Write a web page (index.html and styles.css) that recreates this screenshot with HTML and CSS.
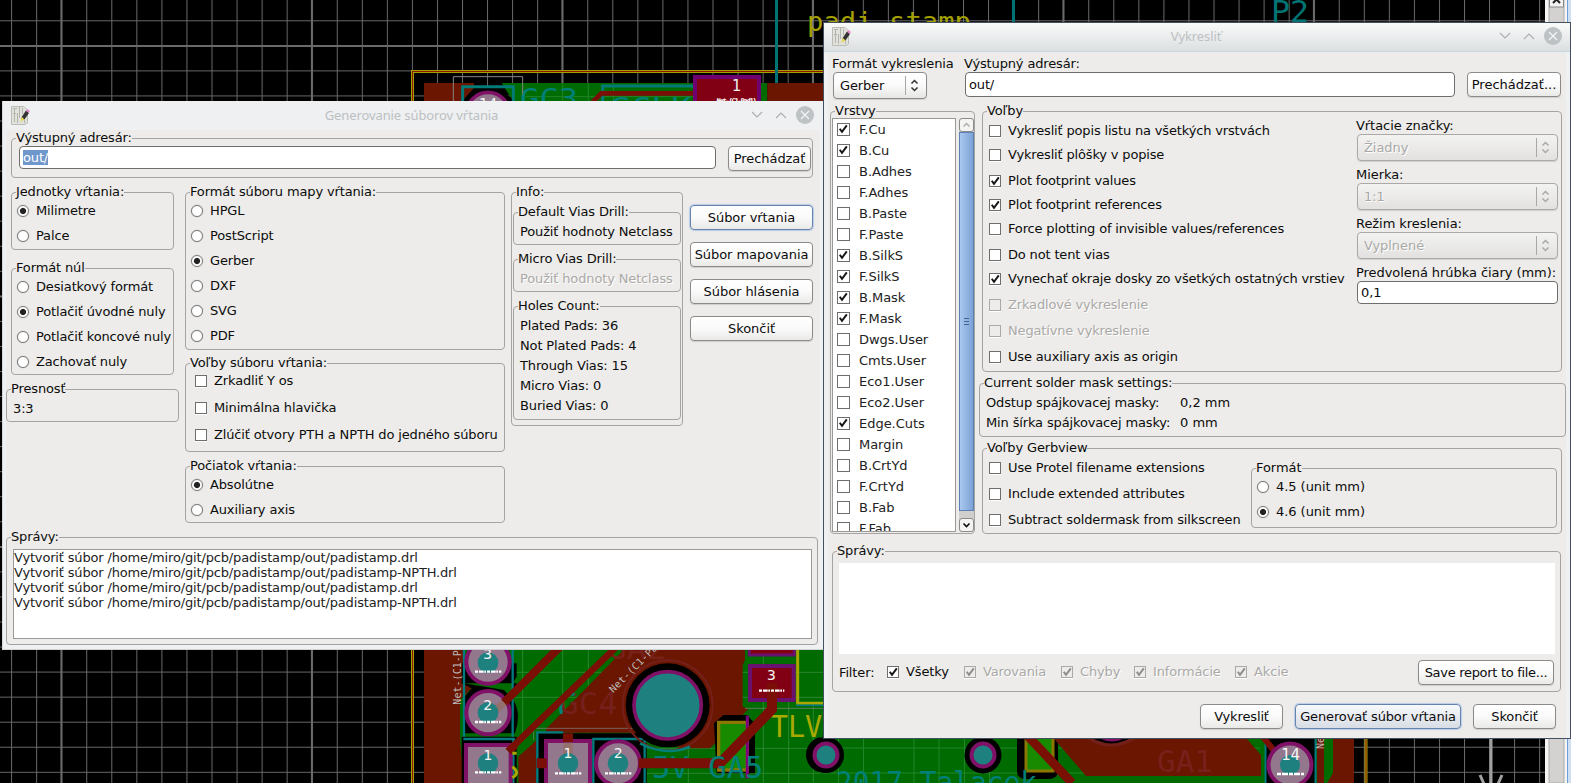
FILE: index.html
```html
<!DOCTYPE html>
<html lang="sk">
<head>
<meta charset="utf-8">
<title>Pcbnew</title>
<link rel="stylesheet" href="styles.css">
</head>
<body>
<svg width="0" height="0" class="defs">
  <symbol id="check" viewBox="0 0 13 13"><path d="M3 6.2 L5.4 9.6 L10.6 2.6" fill="none" stroke="currentColor" stroke-width="2.1"/></symbol>
  <symbol id="updown" viewBox="0 0 9 13"><path d="M1.5 4.5 L4.5 1.5 L7.5 4.5 M1.5 8.5 L4.5 11.5 L7.5 8.5" fill="none" stroke="currentColor" stroke-width="1.5"/></symbol>
  <symbol id="min" viewBox="0 0 12 8"><path d="M1 1 L6 6 L11 1" fill="none" stroke="currentColor" stroke-width="1.1"/></symbol>
  <symbol id="max" viewBox="0 0 12 8"><path d="M1 7 L6 2 L11 7" fill="none" stroke="currentColor" stroke-width="1.1"/></symbol>
  <symbol id="close" viewBox="0 0 18 18"><circle cx="9" cy="9" r="9" fill="#bdc2c5"/><path d="M5 5 L13 13 M13 5 L5 13" stroke="#f4f5f5" stroke-width="1.2"/></symbol>
  <symbol id="app" viewBox="0 0 20 20">
    <path d="M1.500 1.500 H14 L17.500 5 V18 L15 19.500 H1.500 Z" fill="#e2e2dd" stroke="#bcbcb6"/>
    <path d="M4.500 4 V17 M7.500 8 V18 M9.500 2 V13 M12.500 3 V9 M3 3.500 H7 M3 8.500 H6 M14.500 14 V18" stroke="#b4b4ae" fill="none"/>
    <path d="M11 15.500 L12 11.500 L16 5.500 L19 8 L14.800 14 Z" fill="#333"/>
    <path d="M10 17 L11.800 12 L14.500 14.200 Z" fill="#e6d850"/>
    <path d="M16 5.800 L17.600 4 L20 6 L18.800 8 Z" fill="#e08ad0"/>
  </symbol>
</svg>

<svg class="board" viewBox="0 0 1571 783" width="1571" height="783">
  <defs>
    <pattern id="gv" width="25.05" height="25.05" x="11.1" y="20.3" patternUnits="userSpaceOnUse"><path d="M.5 0V25.05M0 .5H25.05" stroke="#6a6a6a" fill="none"/></pattern>
    <pattern id="gm" width="250.5" height="250.5" x="60.4" y="45" patternUnits="userSpaceOnUse"><path d="M1 0V250.5M0 1H250.5" stroke="#6a6a6a" stroke-width="2" fill="none"/></pattern>
  </defs>
  <rect width="1571" height="783" fill="#000"/>
  <rect width="1571" height="783" fill="url(#gv)"/>
  <rect width="1571" height="783" fill="url(#gm)"/>
  <g fill="none"><rect x="412.5" y="71.5" width="953.5" height="760" stroke="#a3a000" stroke-width="3"/><rect x="412.5" y="71.5" width="953.5" height="760" stroke="#8c1800"/></g>
  <path d="M776.5 0V84M1013.500 0V23" stroke="#007474" stroke-width="3"/>
  <g class="stroke-text">
    <text x="807" y="31" font-size="27" textLength="164" lengthAdjust="spacingAndGlyphs" fill="#a3a000">padi stamp</text>
    <text x="1271" y="22" font-size="30" textLength="38" lengthAdjust="spacingAndGlyphs" fill="#007474">P2</text>
  </g>

  <!-- upper strip of the board -->
  <g transform="scale(.33333) translate(1200 0)">
    <path d="M72 249H222V320H72Z" fill="#6b1600"/>
    <path d="M305 249H1102V320H350Z" fill="#006b00"/>
    <path d="M1102 249H1290V320H1102Z" fill="#6b1600"/>
    <path d="M180 310L222 264H300L350 310Z" fill="#000"/>
    <path d="M365 290H880M488 250V310M565 250V310M640 250V310" stroke="#23852a" stroke-width="3"/>
    <path d="M160 310V230H368V310" fill="none" stroke="#888" stroke-width="3"/>
    <path d="M188 310V260H340V310M608 310V258H880" fill="none" stroke="#007b78" stroke-width="9"/>
    <path d="M574 310L604 280H1000" fill="none" stroke="#7a0f08" stroke-width="14"/>
    <circle cx="264" cy="342" r="65" fill="#93778d" stroke="#7f1167" stroke-width="11"/>
    <rect x="885" y="231" width="192" height="100" fill="#820013" stroke="#6f0070" stroke-width="12"/>
    <g class="stroke-text">
      <text x="360" y="324" font-size="80" textLength="175" lengthAdjust="spacingAndGlyphs" fill="#008078">GC3</text>
      <text x="634" y="350" font-size="82" textLength="240" lengthAdjust="spacingAndGlyphs" fill="#008078">SCLK</text>
      <text x="236" y="330" font-size="46" fill="#eee">14</text>
      <text x="995" y="273" font-size="46" fill="#eee">1</text>
      <text x="950" y="310" font-size="19" textLength="120" fill="#fff" stroke="#fff">Net-(C1-Pad1)</text>
    </g>
  </g>

  <!-- lower-left part of the board -->
  <g transform="translate(400 640) scale(.33333)">
    <path d="M72 0H1290V440H72Z" fill="#006b00"/>
    <path d="M340 97H1270M340 172H1270M720 325H1270M340 400H1270M368 0V280M488 0V260M565 0V300M865 300V430M1090 0V430M1166 180V430M1240 190V430" stroke="#2a862e" stroke-width="3" fill="none"/>
    <path d="M72 0H192V130L215 145L180 180V300L192 430H72Z" fill="#6b1600"/>
    <path d="M680 20H1035V60L1028 75V200L1045 207L930 325H850L720 290L690 278H435L440 265Z" fill="#6b1600"/>
    <path d="M355 350L410 300V430H355Z" fill="#6b1600"/>
    <path d="M192 130H350V160Q325 145 350 110V70H185V130L215 145L190 175V280H345Q365 220 340 180L312 150" fill="#000"/>
    <path d="M185 290H350V430H185Z" fill="#000"/>
    <path d="M410 280H720L740 310V430H410Z" fill="#000"/>
    <path d="M192 20V290M338 20V290M190 297H345M412 430V277H490M580 430V297H734V430M340 297V430" fill="none" stroke="#007b80" stroke-width="7"/>
    <path d="M401 300V265H700M1035 205H1270" fill="none" stroke="#888" stroke-width="2"/>
    <circle cx="803" cy="196" r="126" fill="#000"/>
    <circle cx="803" cy="196" r="135" fill="none" stroke="#74201a" stroke-width="6"/>
    <path d="M720 310Q800 350 870 320" fill="none" stroke="#008078" stroke-width="8"/>
    <circle cx="803" cy="196" r="101" fill="#1f8080" stroke="#7f1167" stroke-width="11"/>
    <path d="M942 250L970 225H1040L1065 250V400H950Z" fill="#000"/>
    <path d="M956 247H1042V390H956Z" fill="#178a00" stroke="#8c7800" stroke-width="10"/>
    <path d="M1042 227V415" stroke="#7f007f" stroke-width="9"/>
    <path d="M1050 78H1181V180H1050Z" fill="#820013" stroke="#6a1170" stroke-width="12"/>
    <path d="M1048 10H1183V45H1048Z" fill="#820013" stroke="#6a1170" stroke-width="9"/>
    <path d="M1193 20V190H1270" fill="none" stroke="#aaa800" stroke-width="9"/>
    <path d="M1188 196H1270" stroke="#007b80" stroke-width="5"/>
    <g class="stroke-text">
      <text x="478" y="222" font-size="88" textLength="175" lengthAdjust="spacingAndGlyphs" fill="#75201c">GC4</text>
      <text x="620" y="56" font-size="88" textLength="180" lengthAdjust="spacingAndGlyphs" fill="#762018">GA2</text>
      <text x="755" y="415" font-size="88" textLength="112" lengthAdjust="spacingAndGlyphs" fill="#008078">5V</text>
      <text x="1112" y="290" font-size="92" textLength="155" lengthAdjust="spacingAndGlyphs" fill="#a8aa00">TLV</text>
      <text transform="translate(182 194) rotate(-90)" font-size="30" textLength="200" fill="#bbb">Net-(C1-Pad</text>
      <text transform="translate(640 160) rotate(-45)" font-size="30" textLength="190" fill="#bbb">Net-(C1-Pa</text>
    </g>
    <path d="M484 222Q476 190 496 170Q508 160 524 162" fill="none" stroke="#008078" stroke-width="9"/>
    <path d="M650 20L265 390" stroke="#7a1005" stroke-width="20"/>
    <g fill="#93778d" stroke="#7f1167" stroke-width="12">
      <circle cx="264" cy="66" r="65"/><circle cx="264" cy="218" r="65"/><circle cx="654" cy="370" r="66"/>
      <path d="M198 315H332V440H198ZM438 303H570V440H438Z"/>
    </g>
    <path d="M480 20L312 188M345 315L325 335" stroke="#7a1005" stroke-width="24"/>
    <path d="M312 188L280 218" stroke="#94706c" stroke-width="22"/>
    <path d="M716 370H960L1116 208V130M410 370H440" fill="none" stroke="#7a0f08" stroke-width="30"/>
    <path d="M504 280V306" stroke="#7a0f08" stroke-width="30"/>
    <path d="M504 308V345" stroke="#94706c" stroke-width="28"/>
    <text class="stroke-text" x="925" y="415" font-size="88" textLength="165" lengthAdjust="spacingAndGlyphs" fill="#008078">GA5</text>
    <g fill="#1f8080"><circle cx="264" cy="68" r="31"/><circle cx="264" cy="218" r="31"/><circle cx="264" cy="370" r="31"/><circle cx="504" cy="370" r="31"/><circle cx="654" cy="370" r="31"/></g>
    <path d="M337 340H350M337 380Q362 398 337 413" stroke="#aaa800" stroke-width="9" fill="none"/>
    <g class="stroke-text" fill="#f4f4f4">
      <text x="250" y="56" font-size="44">3</text><text x="250" y="210" font-size="44">2</text><text x="250" y="361" font-size="44">1</text>
      <text x="490" y="355" font-size="44">1</text><text x="641" y="355" font-size="44">2</text><text x="1101" y="121" font-size="44">3</text>
    </g>
    <path d="M225 95H304M225 246H304M225 397H304M465 400H544M615 400H694M1077 152H1153" stroke="#fff" stroke-width="7" stroke-dasharray="9 3 14 2 5 3"/>
    <circle cx="1272" cy="344" r="54" fill="#000"/>
    <circle cx="1272" cy="344" r="32" fill="#1f8080" stroke="#7f1167" stroke-width="11"/>
  </g>

  <!-- lower-right part of the board -->
  <g transform="translate(820 733)">
    <path d="M0 0H515V50H0Z" fill="#006b00"/>
    <path d="M0 15H440M0 40H440M18.500 0V50M43.500 0V50M94 0V50M119 0V50M144.500 0V50M169.500 0V50" stroke="#23852a"/>
    <circle cx="6" cy="22" r="18" fill="#000"/><circle cx="163" cy="22" r="18.500" fill="#000"/>
    <path d="M197 0H238V40Q236 46 228 46H206Q197 46 197 38Z" fill="#000"/>
    <path d="M206 0H233V38H206Z" fill="#178a00" stroke="#8c7800" stroke-width="3"/>
    <path d="M229 0H422L441 22V43H266Z" fill="#6b1600"/>
    <path d="M205 0L252 50" stroke="#7a1005" stroke-width="9"/>
    <path d="M262 0Q290 24 322 0Z" fill="#000" stroke="#74201a" stroke-width="3"/>
    <path d="M280 4Q292 10 304 4" stroke="#7f1167" stroke-width="3" fill="none"/>
    <path d="M445 0H496V50H445Z" fill="#000"/>
    <path d="M496 0H534V50H496Z" fill="#6b1600"/>
    <path d="M505 0H513V40L507 50H496V0Z" fill="#006b00"/>
    <path d="M495.500 0V50M445.500 0V50" stroke="#007b80" stroke-width="2"/>
    <path d="M497 0H504V50H497Z" fill="#6b1600"/>
    <path d="M440 0L462 28" stroke="#7a1005" stroke-width="6"/>
    <g stroke="#7f1167" stroke-width="4"><circle cx="6" cy="22" r="11.500" fill="#1f8080"/><circle cx="163" cy="22" r="11.500" fill="#1f8080"/><circle cx="470" cy="32" r="21.500" fill="#93778d"/></g>
    <circle cx="470" cy="32" r="10" fill="#1f8080"/>
    <path d="M457 41H484" stroke="#fff" stroke-width="2.500" stroke-dasharray="4 1 6 1"/>
    <path d="M671 0V50M660 42L668 60M682 42L674 60" stroke="#a0a0a0" stroke-width="3"/>
    <g class="stroke-text">
      <text x="16" y="60" font-size="31" textLength="201" lengthAdjust="spacingAndGlyphs" fill="#008078">2017 Talacek</text>
      <text x="337" y="39" font-size="30" textLength="56" lengthAdjust="spacingAndGlyphs" fill="#78201c">GA1</text>
      <text x="461" y="27" font-size="15" textLength="19" lengthAdjust="spacingAndGlyphs" fill="#f4f4f4">14</text>
      <text transform="translate(504 16) rotate(-90)" font-size="10" fill="#bbb">Net</text>
    </g>
  </g>

  <!-- canvas scrollbar -->
  <rect x="1545" y="0" width="26" height="783" fill="#f6f5f4"/>
  <rect x="1549" y="0" width="15" height="783" fill="#d4d2d0" stroke="#aaa"/>
  <rect x="1549.500" y="-5" width="14" height="12" fill="#f2f2f2" stroke="#888"/>
  <path d="M1553 3L1556.500 -.5L1560 3" fill="none" stroke="#222" stroke-width="2"/>
  <rect x="1567" y="0" width="4" height="783" fill="#cfdff2"/>
  <rect x="1567" y="0" width="1" height="783" fill="#6f9fd8"/>
</svg>

<section class="window drill">
  <header class="title"><svg class="app"><use href="#app"/></svg><span>Generovanie súborov vŕtania</span><svg class="wm"><use href="#min"/></svg><svg class="wm"><use href="#max"/></svg><svg class="wc"><use href="#close"/></svg></header>
  <div class="body">
    <fieldset class="dir"><legend>Výstupný adresár:</legend>
      <div class="dir-row"><div class="input"><span class="sel">out/</span></div><div class="btn">Prechádzať</div></div>
    </fieldset>
    <div class="cols">
      <div class="col1">
        <fieldset class="units"><legend>Jednotky vŕtania:</legend>
          <div class="radio on"><i></i>Milimetre</div><div class="radio"><i></i>Palce</div></fieldset>
        <fieldset class="zeros"><legend>Formát núl</legend>
          <div class="radio"><i></i>Desiatkový formát</div><div class="radio on"><i></i>Potlačiť úvodné nuly</div><div class="radio"><i></i>Potlačiť koncové nuly</div><div class="radio"><i></i>Zachovať nuly</div></fieldset>
        <fieldset class="prec"><legend>Presnosť</legend><div class="val">3:3</div></fieldset>
      </div>
      <div class="col2">
        <fieldset class="map"><legend>Formát súboru mapy vŕtania:</legend>
          <div class="radio"><i></i>HPGL</div><div class="radio"><i></i>PostScript</div><div class="radio on"><i></i>Gerber</div><div class="radio"><i></i>DXF</div><div class="radio"><i></i>SVG</div><div class="radio"><i></i>PDF</div></fieldset>
        <fieldset class="dopts"><legend>Voľby súboru vŕtania:</legend>
          <div class="chk"><b></b>Zrkadliť Y os</div><div class="chk"><b></b>Minimálna hlavička</div><div class="chk"><b></b>Zlúčiť otvory PTH a NPTH do jedného súboru</div></fieldset>
        <fieldset class="origin"><legend>Počiatok vŕtania:</legend>
          <div class="radio on"><i></i>Absolútne</div><div class="radio"><i></i>Auxiliary axis</div></fieldset>
      </div>
      <fieldset class="info"><legend>Info:</legend>
        <fieldset class="via"><legend>Default Vias Drill:</legend><div class="val">Použiť hodnoty Netclass</div></fieldset>
        <fieldset class="via"><legend>Micro Vias Drill:</legend><div class="val off">Použiť hodnoty Netclass</div></fieldset>
        <fieldset class="holes"><legend>Holes Count:</legend><p>Plated Pads: 36</p><p>Not Plated Pads: 4</p><p>Through Vias: 15</p><p>Micro Vias: 0</p><p>Buried Vias: 0</p></fieldset>
      </fieldset>
      <div class="col4"><div class="btn focus">Súbor vŕtania</div><div class="btn">Súbor mapovania</div><div class="btn">Súbor hlásenia</div><div class="btn">Skončiť</div></div>
    </div>
    <fieldset class="msgs"><legend>Správy:</legend>
      <div class="log"><p>Vytvoriť súbor /home/miro/git/pcb/padistamp/out/padistamp.drl</p><p>Vytvoriť súbor /home/miro/git/pcb/padistamp/out/padistamp-NPTH.drl</p><p>Vytvoriť súbor /home/miro/git/pcb/padistamp/out/padistamp.drl</p><p>Vytvoriť súbor /home/miro/git/pcb/padistamp/out/padistamp-NPTH.drl</p></div>
    </fieldset>
  </div>
</section>

<section class="window plot">
  <header class="title"><svg class="app"><use href="#app"/></svg><span>Vykresliť</span><svg class="wm"><use href="#min"/></svg><svg class="wm"><use href="#max"/></svg><svg class="wc"><use href="#close"/></svg></header>
  <div class="body">
    <div class="top">
      <div class="fmt"><label>Formát vykreslenia</label><div class="choice"><span>Gerber</span><svg><use href="#updown"/></svg></div></div>
      <div class="out"><label>Výstupný adresár:</label><div class="input">out/</div></div>
      <div class="btn">Prechádzať...</div>
    </div>
    <div class="mid">
      <fieldset class="layers"><legend>Vrstvy</legend>
        <div class="list-row">
          <div class="list">
            <div class="chk"><b><svg><use href="#check"/></svg></b>F.Cu</div>
            <div class="chk"><b><svg><use href="#check"/></svg></b>B.Cu</div>
            <div class="chk"><b></b>B.Adhes</div>
            <div class="chk"><b></b>F.Adhes</div>
            <div class="chk"><b></b>B.Paste</div>
            <div class="chk"><b></b>F.Paste</div>
            <div class="chk"><b><svg><use href="#check"/></svg></b>B.SilkS</div>
            <div class="chk"><b><svg><use href="#check"/></svg></b>F.SilkS</div>
            <div class="chk"><b><svg><use href="#check"/></svg></b>B.Mask</div>
            <div class="chk"><b><svg><use href="#check"/></svg></b>F.Mask</div>
            <div class="chk"><b></b>Dwgs.User</div>
            <div class="chk"><b></b>Cmts.User</div>
            <div class="chk"><b></b>Eco1.User</div>
            <div class="chk"><b></b>Eco2.User</div>
            <div class="chk"><b><svg><use href="#check"/></svg></b>Edge.Cuts</div>
            <div class="chk"><b></b>Margin</div>
            <div class="chk"><b></b>B.CrtYd</div>
            <div class="chk"><b></b>F.CrtYd</div>
            <div class="chk"><b></b>B.Fab</div>
            <div class="chk"><b></b>F.Fab</div>
          </div>
          <div class="bar"><div class="arrow dim"><svg viewBox="0 0 9 6"><path d="M1.500 4.500L4.500 1.500L7.500 4.500" fill="none" stroke="currentColor" stroke-width="1.300"/></svg></div><div class="thumb"><u></u><u></u><u></u></div><div class="arrow"><svg viewBox="0 0 9 6"><path d="M1.500 1.500L4.500 4.500L7.500 1.500" fill="none" stroke="currentColor" stroke-width="1.600"/></svg></div></div>
        </div>
      </fieldset>
      <div class="right">
        <fieldset class="opts"><legend>Voľby</legend>
          <div class="opts-row">
            <div class="checks">
              <div class="chk"><b></b>Vykresliť popis listu na všetkých vrstvách</div>
              <div class="chk"><b></b>Vykresliť plôšky v popise</div>
              <div class="chk far"><b><svg><use href="#check"/></svg></b>Plot footprint values</div>
              <div class="chk"><b><svg><use href="#check"/></svg></b>Plot footprint references</div>
              <div class="chk"><b></b>Force plotting of invisible values/references</div>
              <div class="chk far"><b></b>Do not tent vias</div>
              <div class="chk"><b><svg><use href="#check"/></svg></b>Vynechať okraje dosky zo všetkých ostatných vrstiev</div>
              <div class="chk far off"><b></b>Zrkadlové vykreslenie</div>
              <div class="chk far off"><b></b>Negatívne vykreslenie</div>
              <div class="chk far"><b></b>Use auxiliary axis as origin</div>
            </div>
            <div class="combos">
              <label>Vŕtacie značky:</label><div class="choice off"><span>Žiadny</span><svg><use href="#updown"/></svg></div>
              <label>Mierka:</label><div class="choice off"><span>1:1</span><svg><use href="#updown"/></svg></div>
              <label>Režim kreslenia:</label><div class="choice off"><span>Vyplnené</span><svg><use href="#updown"/></svg></div>
              <label>Predvolená hrúbka čiary (mm):</label><div class="input">0,1</div>
            </div>
          </div>
        </fieldset>
        <fieldset class="solder"><legend>Current solder mask settings:</legend>
          <div class="pair"><span>Odstup spájkovacej masky:</span><span>0,2 mm</span><span>Min šírka spájkovacej masky:</span><span>0 mm</span></div>
        </fieldset>
        <fieldset class="gerb"><legend>Voľby Gerbview</legend>
          <div class="gerb-row">
            <div class="checks"><div class="chk"><b></b>Use Protel filename extensions</div><div class="chk far"><b></b>Include extended attributes</div><div class="chk far"><b></b>Subtract soldermask from silkscreen</div></div>
            <fieldset class="gfmt"><legend>Formát</legend><div class="radio"><i></i>4.5 (unit mm)</div><div class="radio on"><i></i>4.6 (unit mm)</div></fieldset>
          </div>
        </fieldset>
      </div>
    </div>
    <fieldset class="report"><legend>Správy:</legend>
      <div class="blank"></div>
      <div class="filter"><span class="lab">Filter:</span>
        <div class="chk f1"><b><svg><use href="#check"/></svg></b>Všetky</div>
        <div class="chk f2 off"><b><svg><use href="#check"/></svg></b>Varovania</div>
        <div class="chk f3 off"><b><svg><use href="#check"/></svg></b>Chyby</div>
        <div class="chk f4 off"><b><svg><use href="#check"/></svg></b>Informácie</div>
        <div class="chk f5 off"><b><svg><use href="#check"/></svg></b>Akcie</div>
        <div class="btn save">Save report to file...</div>
      </div>
    </fieldset>
    <div class="actions"><div class="btn b1">Vykresliť</div><div class="btn b2 focus dark">Generovať súbor vŕtania</div><div class="btn b1">Skončiť</div></div>
  </div>
</section>
</body>
</html>
```
FILE: styles.css
```css
* { box-sizing: border-box; }
body { margin: 0; width: 1571px; height: 783px; overflow: hidden; position: relative; background: #000; color: #0c0c0c; font: 13px/15px "DejaVu Sans", sans-serif; letter-spacing: -.14px; }
.defs { position: absolute; }
.board { display: block; letter-spacing: 0; }
.stroke-text { font-family: "DejaVu Sans Mono", monospace; }
p { margin: 0; }
label, legend, span, .chk, .radio, .btn, p, .val { white-space: nowrap; }

/* windows */
.window { position: absolute; display: flex; flex-direction: column; background: #eff0f2; }
.drill { left: 2px; top: 101px; width: 821px; height: 549px; border-left: 1px solid #d4d8da; border-bottom: 1px solid #d0d3d6; }
.plot { left: 823px; top: 22px; width: 748px; height: 717px; border: 1px solid #435060; }
.title { display: flex; align-items: center; height: 29px; flex: none; padding: 0 9px 1px 7px; font: 13px/18px "Noto Sans", sans-serif; color: #bcc0c3; letter-spacing: -.1px; }
.title span { flex: 1; text-align: center; padding-left: 42px; }
.plot .title { background: linear-gradient(#f9fafa, #dcdfe0); border-bottom: 1px solid #c8d8e2; padding: 0 8px 2px 7px; }
.app { width: 20px; height: 20px; flex: none; }
.wm { width: 12px; height: 8px; margin-right: 12px; color: #a9aeb1; flex: none; }
.wm + .wm { margin-right: 9px; }
.wc { width: 18px; height: 18px; flex: none; }
.body { flex: 1; background: #edecea; margin: 0 4px 4px 3px; display: flex; flex-direction: column; }
.plot .body { margin: 0 4px; }

/* group boxes */
fieldset { margin: 0; padding: 0; min-width: 0; border: 1px solid #a5a4a2; border-radius: 4px; }
legend { padding: 0; margin-left: 4px; height: 15px; line-height: 13px; }

/* controls */
.btn { display: flex; align-items: center; justify-content: center; height: 25px; border: 1px solid #8c8b89; border-radius: 4px; background: linear-gradient(#fff, #fafafa 50%, #e9e9e8); box-shadow: 0 1px 1px #d0cfcd; }
.btn.focus { border-color: #6583ad; box-shadow: 0 0 1px 1px #b9cce6; }
.btn.dark { background: linear-gradient(#f7f9fc, #d8dde5); }
.input { height: 23px; border: 1px solid #6f6e6c; border-radius: 4px; background: #fff; padding: 3px 3px 0; }
.sel { display: inline-block; background: #7097cb; color: #fff; }
.radio { display: flex; align-items: center; height: 22px; margin-bottom: 3px; padding: 0 0 2px 5px; }
.radio i { width: 12px; height: 12px; border: 1px solid #7c7b79; border-radius: 50%; background: #fff; margin: 2px 7px 0 0; flex: none; box-shadow: 0 0 1px #999; }
.radio.on i { background: radial-gradient(circle at 50% 50%, #222 0 2.6px, #fff 3.6px); }
.chk { display: flex; align-items: center; height: 20px; padding-bottom: 2px; }
.chk b { width: 12px; height: 12px; border: 1px solid #6f6e6c; background: #fff; margin: 2px 7px 0 0; flex: none; display: block; box-shadow: 0 1px 0 #fff; }
.chk svg { display: block; width: 12px; height: 12px; margin: -1px; color: #161616; }
.off { color: #aaa9a7; text-shadow: 1px 1px 0 #fff; }
.chk.off b { border-color: #aaa9a7; background: #edecea; }
.chk.off svg { color: #8e8d8b; }
.choice { display: flex; align-items: center; height: 27px; border: 1px solid #8c8b89; border-radius: 4px; background: linear-gradient(#fff, #fafafa 50%, #e6e6e4); padding-left: 6px; box-shadow: 0 1px 1px #d0cfcd; }
.choice span { flex: 1; }
.choice svg { width: 21px; height: 19px; padding: 3px 7px 3px 5px; color: #333; background: linear-gradient(#a9a8a6, #a9a8a6) left / 1px 100% no-repeat; }
.choice.off { background: linear-gradient(#f3f3f2, #e2e1df); border-color: #aaa9a7; }
.choice.off svg { color: #aaa9a7; }
.val { height: 24px; line-height: 24px; padding-left: 6px; }

/* drill dialog */
.drill .btn { letter-spacing: -.05px; }
.dir { margin: 1px 6px 0 5px; height: 47px; }
.dir-row { display: flex; justify-content: space-between; padding: 0 1px 0 7px; }
.dir .input { width: 697px; }
.dir .btn { width: 83px; }
.cols { display: grid; grid-template-columns: 173px 320px 172px 123px; column-gap: 6px; margin-top: 7px; height: 345px; align-items: start; }
.units { margin: 0 5px; height: 65px; }
.zeros { margin: 11px 5px 0; height: 114px; }
.prec { margin-top: 7px; height: 40px; }
.map { height: 165px; }
.dopts { margin-top: 6px; height: 96px; }
.dopts .chk { margin-bottom: 7px; padding-left: 9px; }
.origin { margin-top: 7px; height: 64px; }
.info { height: 241px; }
.via { margin: 5px 1px 0; height: 40px; }
.via + .via { margin-top: 7px; }
.holes { margin: 7px 1px 0; height: 121px; }
.holes p { line-height: 20px; padding-left: 6px; position: relative; top: 2px; }
.col4 { padding-top: 20px; display: flex; flex-direction: column; gap: 12px; margin-left: 1px; width: 123px; }
.msgs { width: 812px; height: 115px; }
.log { margin: 4px 5px 0 6px; height: 90px; background: #fff; border: 1px solid #9a9996; color: #222; letter-spacing: -.16px; }

/* plot dialog */
.top { display: flex; height: 52px; padding: 4px 0 0 4px; flex: none; }
.top label { display: block; height: 16px; line-height: 15px; }
.fmt { width: 132px; }
.fmt .choice { width: 94px; margin-left: 1px; }
.out { width: 491px; }
.out .input { margin-left: 1px; height: 25px; padding-top: 4px; }
.top .btn { width: 94px; margin: 16px 0 0 12px; letter-spacing: 0; }
.mid { display: flex; height: 440px; flex: none; }
.layers { width: 145px; height: 430px; margin-left: 2px; }
.list-row { display: flex; margin-top: -1px; margin-left: 1px; gap: 3px; height: 414px; }
.list { width: 124px; background: #fff; border: 1px solid #9a9996; overflow: hidden; padding: 0 0 0 4px; color: #222; letter-spacing: -.03px; }
.list .chk { height: 21px; padding-bottom: 0; }
.list .chk b { width: 13px; height: 13px; margin: 0 9px 0 0; }
.bar { width: 15px; display: flex; flex-direction: column; background: #d0cfcd; border-radius: 3px; }
.arrow { height: 14px; border: 1px solid #8c8b89; border-radius: 3px; background: #f4f4f3; display: flex; align-items: center; justify-content: center; }
.arrow.dim { color: #aaa; }
.arrow svg { width: 9px; height: 6px; }
.thumb { height: 379px; margin-bottom: 7px; background: linear-gradient(90deg, #a9c8ee, #7ba2d6); border: 1px solid #5c80b4; display: flex; flex-direction: column; align-items: center; justify-content: center; gap: 2px; }
.thumb u { width: 5px; height: 1px; background: #44648f; }
.right { margin-left: 4px; width: 587px; }
.opts { margin: 0 4px 0 3px; height: 268px; }
.opts-row { display: flex; padding-left: 6px; }
.opts .checks { width: 367px; padding-top: 2px; letter-spacing: -.16px; }
.checks .chk + .chk { margin-top: 4px; }
.checks .chk + .far { margin-top: 6px; }
.combos { width: 202px; letter-spacing: -.06px; }
.combos label { display: block; height: 15px; line-height: 13px; }
.combos .choice, .combos .input { margin: 0 0 7px 1px; }
.solder { margin-top: 4px; height: 61px; }
.pair { display: grid; grid-template-columns: 194px 1fr; line-height: 20px; padding: 2px 0 0 6px; }
.pair span:nth-child(even) { letter-spacing: 0; }
.gerb { margin: 4px 4px 0 3px; height: 93px; }
.gerb-row { display: flex; padding-left: 6px; }
.gerb .checks { width: 262px; padding-top: 2px; }
.gfmt { width: 306px; height: 67px; margin-top: 5px; letter-spacing: -.05px; }
.report { margin-left: 4px; width: 729px; height: 148px; flex: none; }
.blank { height: 91px; margin: 4px 5px 0 6px; background: #fff; }
.filter { display: flex; height: 25px; margin: 6px 6px 0; align-items: center; }
.lab { width: 48px; }
.f1 { width: 77px; } .f2 { width: 97px; } .f3 { width: 73px; } .f4 { width: 101px; }
.filter .chk b { margin-top: 1px; }
.save { width: 136px; margin-left: auto; letter-spacing: -.3px; }
.actions { display: flex; justify-content: flex-end; gap: 12px; padding: 12px 10px 0 0; }
.b1 { width: 83px; } .b2 { width: 166px; }
```
